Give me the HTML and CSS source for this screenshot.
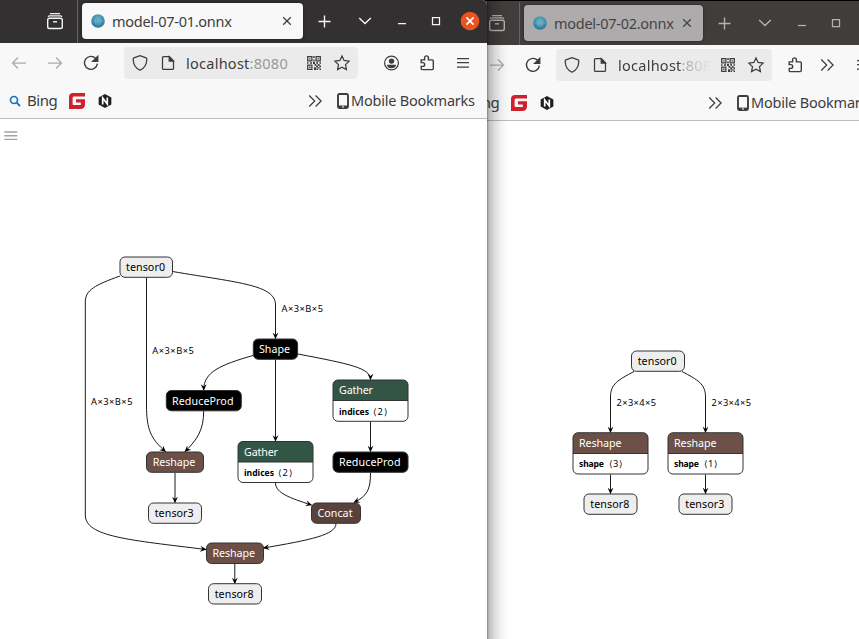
FILE: index.html
```html
<!DOCTYPE html>
<html lang="en">
<head>
<meta charset="utf-8">
<title>model-07-01.onnx</title>
<link rel="stylesheet" href="styles.css">
</head>
<body>
<svg class="defs" width="0" height="0" aria-hidden="true">
  <defs>
    <radialGradient id="globe" cx=".5" cy=".3" r=".75"><stop offset="0" stop-color="#60a9bd"/><stop offset=".65" stop-color="#378bad"/><stop offset="1" stop-color="#266c8f"/></radialGradient>
    <marker id="arrow" viewBox="0 0 10 10" refX="9" refY="5" markerUnits="userSpaceOnUse" markerWidth="6.500" markerHeight="6.500" orient="auto"><path d="M0 0.500 L10 5 L0 9.500 L3.500 5 Z"/></marker>
    <symbol id="library" viewBox="0 0 20 20"><path d="M5 2.600h10M3.300 5.900c0-.8.400-1.100 1-1.100h11.400c.6 0 1 .3 1 1.100" stroke-width="1.200"/><rect x="2.700" y="7.300" width="14.600" height="10.200" rx="1.800" stroke-width="1.400"/><path d="M8 10.800h4" stroke-width="1.400"/></symbol>
    <symbol id="close" viewBox="0 0 20 20"><path d="M6.200 6.200l7.600 7.600M13.800 6.200l-7.600 7.600"/></symbol>
    <symbol id="plus" viewBox="0 0 20 20"><path d="M10.500 4.500v12M4.500 10.500h12" stroke-width="1.400"/></symbol>
    <symbol id="chevron" viewBox="0 0 20 20"><path d="M4.200 7l5.800 5.600L15.800 7" stroke-width="1.400"/></symbol>
    <symbol id="minimise" viewBox="0 0 20 20"><path d="M6 12.500h8"/></symbol>
    <symbol id="maximise" viewBox="0 0 20 20"><path d="M6.500 6.500h7v7h-7z"/></symbol>
    <symbol id="back" viewBox="0 0 20 20"><path d="M17 10H3.500M9 4.500L3.500 10 9 15.500"/></symbol>
    <symbol id="forward" viewBox="0 0 20 20"><path d="M3 10h13.500M11 4.500l5.500 5.500-5.500 5.500"/></symbol>
    <symbol id="reload" viewBox="0 0 20 20"><path d="M16.400 10.700A6.500 6.500 0 1 1 14.800 5.500" stroke-width="1.400"/><path d="M16.800 3.200v5.200h-5.200z" class="solid"/></symbol>
    <symbol id="shield" viewBox="0 0 20 20"><path d="M10 2.700l6.100 2.200c.5.200.7.500.7 1 0 5.300-2.200 9.100-6.800 11.300C5.400 15 3.200 11.200 3.200 5.900c0-.5.2-.8.7-1z"/></symbol>
    <symbol id="file" viewBox="0 0 20 20"><path d="M5.500 3.600h5.800l4.200 4.200v7.600c0 .7-.3 1-1 1h-9c-.7 0-1-.3-1-1V4.600c0-.7.300-1 1-1z"/><path d="M11.200 3.700v4.400h4.200z" class="solid"/></symbol>
    <symbol id="qr" viewBox="0 0 20 20"><path d="M3.700 3.700h4.200v4.200H3.700zM12.100 3.700h4.200v4.200h-4.200zM3.700 12.100h4.200v4.200H3.700z"/><path class="solid fine" d="M5.200 5.200h1.400v1.400H5.200zM13.500 5.200h1.400v1.400h-1.400zM5.200 13.500h1.400v1.400H5.200zM9.300 3h1.400v2H9.300zM9.300 6.500h1.400v2H9.300zM3 9.300h1.500v1.400H3zM6 9.300h2v1.400H6zM9 9h2v2H9zM12.300 9h1.700v1.700h-1.700zM15.500 9.300H17v1.400h-1.500zM10.500 11h1.800v1.800h-1.800zM13.800 11h1.800v1.800h-1.800zM12.200 12.600H14v1.800h-1.800zM15.400 12.600H17v1.600h-1.600zM10 14.300h2V17h-2zM13.800 14.300h1.700v1.300h-1.700zM12.500 15.500H14V17h-1.500zM15.500 15.500H17V17h-1.500z"/></symbol>
    <symbol id="star" viewBox="0 0 20 20"><path d="M10 2.900l2.100 4.500 5 .7-3.600 3.500.9 5-4.400-2.400-4.400 2.400.9-5-3.600-3.500 5-.7z"/></symbol>
    <symbol id="account" viewBox="0 0 20 20"><circle cx="10.500" cy="10" r="6.900"/><circle class="solid" cx="10.500" cy="8.100" r="2.100"/><path class="solid" d="M6.700 12.400h7.600c-.4 1.500-1.900 2.300-3.800 2.300s-3.400-.8-3.800-2.300z"/></symbol>
    <symbol id="puzzle" viewBox="0 0 20 20"><path d="M4.200 6.900h3.400V4.800a1.900 1.900 0 0 1 3.800 0v2.100h3.900c.7 0 1 .3 1 1v7.700c0 .7-.3 1-1 1H5.200c-.7 0-1-.3-1-1v-2.200h1.600a1.900 1.900 0 0 0 0-3.800H4.200z" stroke-width="1.400"/></symbol>
    <symbol id="menu" viewBox="0 0 20 20"><path d="M4 5.500h12M4 9.700h12M4 14h12"/></symbol>
    <symbol id="more" viewBox="0 0 20 20"><path d="M4.200 4.500L9.700 10l-5.500 5.500M10.600 4.500l5.500 5.500-5.500 5.500"/></symbol>
    <symbol id="search" viewBox="0 0 20 20"><circle cx="9" cy="9" r="3.500" stroke-width="1.700"/><path d="M11.700 11.700l3.300 3.300" stroke-width="1.900"/></symbol>
    <symbol id="phone" viewBox="0 0 12 16"><rect x="1" y="1" width="10" height="14" rx="1.500" stroke-width="1.900"/><path d="M1.500 13.700h9" stroke-width="2.200"/><circle cx="6" cy="13.900" r=".8" fill="#fff" stroke="none"/></symbol>
    <symbol id="gmark" viewBox="0 0 16 16"><path d="M4 0h12v3.600H5.200c-1 0-1.600.6-1.600 1.600v5.600c0 .8.500 1.200 1.200 1.200h7V9.500H7V6.200h9v5c0 3-1.600 4.800-4.600 4.800H0V4C0 1.500 1.500 0 4 0z" fill="#cf202b" stroke="none"/></symbol>
    <symbol id="nmark" viewBox="0 0 14 16"><path d="M7 1.800l5.600 3.100v6.200L7 14.200l-5.600-3.100V4.900z" fill="#1d2023" stroke="#1d2023" stroke-width="1.500" stroke-linejoin="round"/><path d="M4.700 11.500V5l4.600 6V4.600" stroke="#fff" stroke-width="1.700"/></symbol>
    <symbol id="favicon" viewBox="0 0 14 14"><circle cx="7" cy="7" r="6.800" fill="url(#globe)" stroke="none"/><path d="M2.500 7h2M4.500 4.500v5M6.200 3v8M8 4v7M9.500 5v4M9.500 7h2.500M4.500 5l5 4M4.500 9L9.500 5" stroke="#8bb9c6" stroke-width=".5"/></symbol>
  </defs>
</svg>

<section class="window rear">
  <header class="titlebar">
    <svg class="icon library"><use href="#library"/></svg>
    <div class="tab">
      <svg class="favicon"><use href="#favicon"/></svg>
      <span class="tab-title">model-07-02.onnx</span>
      <svg class="icon tab-close"><use href="#close"/></svg>
    </div>
    <svg class="icon new-tab"><use href="#plus"/></svg>
    <svg class="icon list-tabs"><use href="#chevron"/></svg>
    <svg class="icon minimise"><use href="#minimise"/></svg>
    <svg class="icon maximise"><use href="#maximise"/></svg>
  </header>
  <nav class="toolbar">
    <svg class="icon dim"><use href="#back"/></svg>
    <svg class="icon dim"><use href="#forward"/></svg>
    <svg class="icon"><use href="#reload"/></svg>
    <div class="urlbar">
      <svg class="icon"><use href="#shield"/></svg>
      <svg class="icon"><use href="#file"/></svg>
      <span class="url">localhost<i>:8080</i></span>
      <svg class="icon"><use href="#qr"/></svg>
      <svg class="icon"><use href="#star"/></svg>
    </div>
    <svg class="icon extensions"><use href="#puzzle"/></svg>
    <svg class="icon overflow"><use href="#more"/></svg>
    <svg class="icon app-menu"><use href="#menu"/></svg>
  </nav>
  <nav class="bookmarks">
    <svg class="icon search"><use href="#search"/></svg>
    <span class="bing">Bing</span>
    <svg class="gmark"><use href="#gmark"/></svg>
    <svg class="nmark"><use href="#nmark"/></svg>
    <svg class="icon more"><use href="#more"/></svg>
    <svg class="phone"><use href="#phone"/></svg>
    <span class="mobile">Mobile Bookmarks</span>
  </nav>
  <main class="page">
    <svg class="graph" width="417" height="518" viewBox="442 121 417 518">
      <g class="edges">
        <path d="M634 371.500C618 380 610.500 384 610.500 397V432.500"/>
        <path d="M682 371.500C698 380 705.500 384 705.500 397V432.500"/>
        <path d="M610.500 474.500V493.500"/>
        <path d="M705.500 474.500V493.500"/>
      </g>
      <g class="nodes">
        <rect class="tensor" x="631.500" y="351" width="53" height="20.300" rx="5"/>
        <path class="head reshape" d="M573 453.500V438q0-5 5-5H643q5 0 5 5V453.500z"/>
        <path class="outline" d="M573 453.500h75"/>
        <rect class="outline" x="573" y="432.700" width="75" height="41.300" rx="5"/>
        <path class="head reshape" d="M668 453.500V438q0-5 5-5H738q5 0 5 5V453.500z"/>
        <path class="outline" d="M668 453.500h75"/>
        <rect class="outline" x="668" y="432.700" width="75" height="41.300" rx="5"/>
        <rect class="tensor" x="584" y="494" width="53" height="20.300" rx="5"/>
        <rect class="tensor" x="679" y="494" width="53" height="20.300" rx="5"/>
      </g>
      <g class="labels">
        <text x="637.700" y="365" textLength="39">tensor0</text>
        <text class="light" x="579" y="447" textLength="42.500">Reshape</text>
        <text class="light" x="674" y="447" textLength="42.500">Reshape</text>
        <text x="590.300" y="508" textLength="39">tensor8</text>
        <text x="685.300" y="508" textLength="39">tensor3</text>
      </g>
      <g class="small">
        <text x="616.500" y="405.700" textLength="39.500">2×3×4×5</text>
        <text x="711.500" y="405.700" textLength="39.500">2×3×4×5</text>
        <text class="attr" x="579" y="467" textLength="25">shape</text><text x="608.500" y="467" textLength="14.500">⟨3⟩</text>
        <text class="attr" x="674" y="467" textLength="25">shape</text><text x="703.500" y="467" textLength="14.500">⟨1⟩</text>
      </g>
    </svg>
  </main>
</section>

<section class="window front">
  <header class="titlebar">
    <svg class="icon library"><use href="#library"/></svg>
    <div class="tab">
      <svg class="favicon"><use href="#favicon"/></svg>
      <span class="tab-title">model-07-01.onnx</span>
      <svg class="icon tab-close"><use href="#close"/></svg>
    </div>
    <svg class="icon new-tab"><use href="#plus"/></svg>
    <svg class="icon list-tabs"><use href="#chevron"/></svg>
    <svg class="icon minimise"><use href="#minimise"/></svg>
    <svg class="icon maximise"><use href="#maximise"/></svg>
    <svg class="icon window-close" viewBox="0 0 20 20"><circle cx="10" cy="10" r="9.300"/><path d="M6.400 6.400l7.200 7.200M13.600 6.400l-7.200 7.200"/></svg>
  </header>
  <nav class="toolbar">
    <svg class="icon dim"><use href="#back"/></svg>
    <svg class="icon dim"><use href="#forward"/></svg>
    <svg class="icon"><use href="#reload"/></svg>
    <div class="urlbar">
      <svg class="icon"><use href="#shield"/></svg>
      <svg class="icon"><use href="#file"/></svg>
      <span class="url">localhost<i>:8080</i></span>
      <svg class="icon"><use href="#qr"/></svg>
      <svg class="icon"><use href="#star"/></svg>
    </div>
    <svg class="icon account"><use href="#account"/></svg>
    <svg class="icon extensions"><use href="#puzzle"/></svg>
    <svg class="icon app-menu"><use href="#menu"/></svg>
  </nav>
  <nav class="bookmarks">
    <svg class="icon search"><use href="#search"/></svg>
    <span class="bing">Bing</span>
    <svg class="gmark"><use href="#gmark"/></svg>
    <svg class="nmark"><use href="#nmark"/></svg>
    <svg class="icon more"><use href="#more"/></svg>
    <svg class="phone"><use href="#phone"/></svg>
    <span class="mobile">Mobile Bookmarks</span>
  </nav>
  <main class="page">
    <svg class="graph" width="487" height="520" viewBox="0 119 487 520">
      <path class="page-menu" d="M4.300 132h13M4.300 135.700h13M4.300 139.400h13"/>
      <g class="edges">
        <path d="M120 276C95 285 85.300 290 85.300 302V515C85.300 537 130 540 206 549.500"/>
        <path d="M146.500 277.500V405C146.500 430 151 439 165.500 451.500"/>
        <path d="M172.500 271.500C240 283 275.500 285 275.500 305V338.500"/>
        <path d="M253 355.500C220 365 203.700 372 203.700 390"/>
        <path d="M203.700 411C203.700 430 197 440 185 451.500"/>
        <path d="M275.500 359.500V441"/>
        <path d="M298 354C350 364 370.500 368 370.500 379.500"/>
        <path d="M370.500 421.500V451.500"/>
        <path d="M275.500 483C275.500 493 290 498 311.500 505"/>
        <path d="M370.500 473C370.500 490 367 496 354 502.500"/>
        <path d="M336 523.500C336 535 310 540 263.500 548"/>
        <path d="M175 473V502.500"/>
        <path d="M234.800 564V583.500"/>
      </g>
      <g class="nodes">
        <rect class="tensor" x="120" y="257" width="52.500" height="20.300" rx="5"/>
        <rect class="op" x="253.300" y="339" width="44.300" height="20.300" rx="5"/>
        <rect class="op" x="166.300" y="390.500" width="75" height="20.300" rx="5"/>
        <path class="head gather" d="M333 400.500V385q0-5 5-5H403q5 0 5 5V400.500z"/>
        <path class="outline" d="M333 400.500h75"/>
        <rect class="outline" x="333" y="380" width="75" height="41.300" rx="5"/>
        <path class="head gather" d="M238 462V446.500q0-5 5-5H308q5 0 5 5V462z"/>
        <path class="outline" d="M238 462h75"/>
        <rect class="outline" x="238" y="441.500" width="75" height="41" rx="5"/>
        <rect class="reshape" x="146.500" y="452" width="57" height="20.300" rx="5"/>
        <rect class="op" x="333" y="452" width="75" height="20.300" rx="5"/>
        <rect class="tensor" x="148.500" y="503" width="53" height="20.300" rx="5"/>
        <rect class="concat" x="311.500" y="503" width="49" height="20.300" rx="5"/>
        <rect class="reshape" x="206.500" y="543" width="57" height="20.500" rx="5"/>
        <rect class="tensor" x="208.500" y="583.700" width="53" height="20.300" rx="5"/>
      </g>
      <g class="labels">
        <text x="126" y="271" textLength="39">tensor0</text>
        <text class="light" x="259" y="353" textLength="31">Shape</text>
        <text class="light" x="172" y="404.800" textLength="61.500">ReduceProd</text>
        <text class="light" x="339" y="394" textLength="34">Gather</text>
        <text class="light" x="244" y="456" textLength="34">Gather</text>
        <text class="light" x="152.800" y="466" textLength="42.500">Reshape</text>
        <text class="light" x="339" y="466" textLength="61.500">ReduceProd</text>
        <text x="154.700" y="517" textLength="39">tensor3</text>
        <text class="light" x="317.500" y="517" textLength="35">Concat</text>
        <text class="light" x="212.500" y="557" textLength="42.500">Reshape</text>
        <text x="214.700" y="598" textLength="39">tensor8</text>
      </g>
      <g class="small">
        <text x="281.500" y="312" textLength="41.500">A×3×B×5</text>
        <text x="152.300" y="354" textLength="41.500">A×3×B×5</text>
        <text x="91" y="405" textLength="41.500">A×3×B×5</text>
        <text class="attr" x="339" y="415" textLength="30">indices</text><text x="373" y="415" textLength="14.500">⟨2⟩</text>
        <text class="attr" x="244" y="476" textLength="30">indices</text><text x="278" y="476" textLength="14.500">⟨2⟩</text>
      </g>
    </svg>
  </main>
</section>
</body>
</html>
```
FILE: styles.css
```css
* { box-sizing: border-box; }
body {
  margin: 0;
  width: 859px;
  height: 639px;
  overflow: hidden;
  position: relative;
  background: #000;
  color: #3d3d3d;
  font: 15px/20px "Noto Sans", "Open Sans", sans-serif;
}
.defs { position: absolute; }
svg { display: block; flex: none; }

/* Windows on the desktop */
.window { position: absolute; background: #fff; overflow: hidden; }
.front { left: 0; top: 0; width: 487px; height: 639px; border-radius: 0 5px 0 0; }
.rear { left: 442px; top: 1px; width: 417px; height: 638px; }
.rear::after {
  content: "";
  position: absolute;
  left: 45px;
  top: 0;
  width: 22px;
  height: 638px;
  background: linear-gradient(to right, rgba(0,0,0,.48), rgba(0,0,0,.25) 2px, rgba(0,0,0,.13) 8px, rgba(0,0,0,.04) 15px, transparent);
}

.icon {
  width: 20px;
  height: 20px;
  fill: none;
  stroke: currentColor;
  stroke-width: 1.25;
}
.solid { fill: currentColor; }
.fine { stroke: none; }

.titlebar {
  display: flex;
  align-items: center;
  height: 43px;
  padding-left: 45px;
  background: #333031;
  color: #f4f4f4;
}
.rear .titlebar { height: 44px; padding-top: 1px; background: #403e3d; color: #b4b2b1; }
.titlebar .icon { margin-bottom: 1px; }
.tab {
  position: relative;
  display: flex;
  flex: none;
  align-items: center;
  width: 221px;
  height: 36px;
  margin: 0 0 1px 17px;
  padding-left: 9px;
  border-radius: 4px;
  background: #f8f8f8;
  color: #3d3d3d;
  box-shadow: 0 0 3px rgba(0,0,0,.5);
}
.tab::before {
  content: "";
  position: absolute;
  left: -5px;
  top: -3px;
  width: 1px;
  height: 43px;
  background: #666364;
}
.rear .tab { width: 179px; background: #aeabac; color: #454344; }
.titlebar .tab-close { margin-bottom: 0; }
.favicon { width: 14px; height: 14px; fill: none; }
.tab-title { width: 121px; margin-left: 7px; white-space: nowrap; font-size: 14.5px; letter-spacing: -.27px; }
.tab-close { margin-left: 44px; }
.rear .tab-close { margin-left: 2px; }
.new-tab { margin-left: 11px; }
.list-tabs { margin-left: 21px; }
.minimise { margin-left: 17px; }
.maximise { margin-left: 14px; }
.window-close { margin-left: 14px; color: #fff; stroke-width: 1.7; }
.window-close circle { fill: #e95420; stroke: none; }

.toolbar {
  display: flex;
  align-items: center;
  height: 41px;
  padding: 0 0 1px 9px;
  background: #f8f8f8;
}
.toolbar > .icon + .icon { margin-left: 16px; }
.toolbar .dim { color: #aaa; }
.urlbar {
  display: flex;
  flex: none;
  align-items: center;
  width: 234px;
  height: 32px;
  margin-left: 23px;
  padding-left: 6px;
  border-radius: 4px;
  background: #ebebeb;
}
.rear .urlbar { width: 216px; margin-left: 13px; }
.urlbar .icon + .icon { margin-left: 8px; }
.url { flex: none; width: 104px; margin: 0 14px 0 8px; overflow: hidden; white-space: nowrap; font-size: 14.5px; letter-spacing: .26px; }
.rear .url { width: 93px; margin-right: 7px; -webkit-mask: linear-gradient(to right, #000 65%, transparent); mask: linear-gradient(to right, #000 65%, transparent); }
.url i { font-style: normal; color: #999; }
.account { margin-left: 23px; }
.rear .extensions { margin-left: 13px; }
.toolbar > .overflow.icon { margin-left: 12px; }

.bookmarks {
  display: flex;
  align-items: center;
  height: 35px;
  padding: 0 0 1px 5px;
  border-bottom: 1px solid #bcbcbc;
  background: #f8f8f8;
}
.rear .bookmarks { padding-left: 5px; }
.bookmarks .search { color: #1873c7; }
.bing { flex: none; width: 32px; margin: 0 0 1px 2px; letter-spacing: -.45px; }
.gmark { width: 16px; height: 16px; margin-left: 10px; fill: none; }
.nmark { width: 14px; height: 16px; margin-left: 13px; fill: none; }
.more { margin-left: 193px; }
.rear .more { margin-left: 151px; }
.phone { width: 12px; height: 16px; margin-left: 12px; fill: none; stroke: currentColor; }
.mobile { flex: none; margin: 0 0 1px 2px; white-space: nowrap; font-size: 14.5px; letter-spacing: -.22px; }

/* Model graph */
.page-menu { fill: none; stroke: #a3a3a3; stroke-width: 1.4; }
.edges path { fill: none; stroke: #000; stroke-width: .9; marker-end: url(#arrow); }
.nodes rect, .nodes path { stroke: #333; stroke-width: 1; }
.nodes .head { stroke: none; }
.nodes .tensor { fill: #eee; }
.nodes .op { fill: #000; }
.nodes .reshape { fill: #6c4f47; }
.nodes .concat { fill: #59423b; }
.nodes .gather { fill: #335545; }
.nodes .outline { fill: none; }
.labels { font-size: 10.7px; fill: #000; }
.labels .light { fill: #fff; }
.small { font-size: 9.3px; fill: #000; }
.small .attr { font-size: 8.6px; font-weight: bold; }
```
